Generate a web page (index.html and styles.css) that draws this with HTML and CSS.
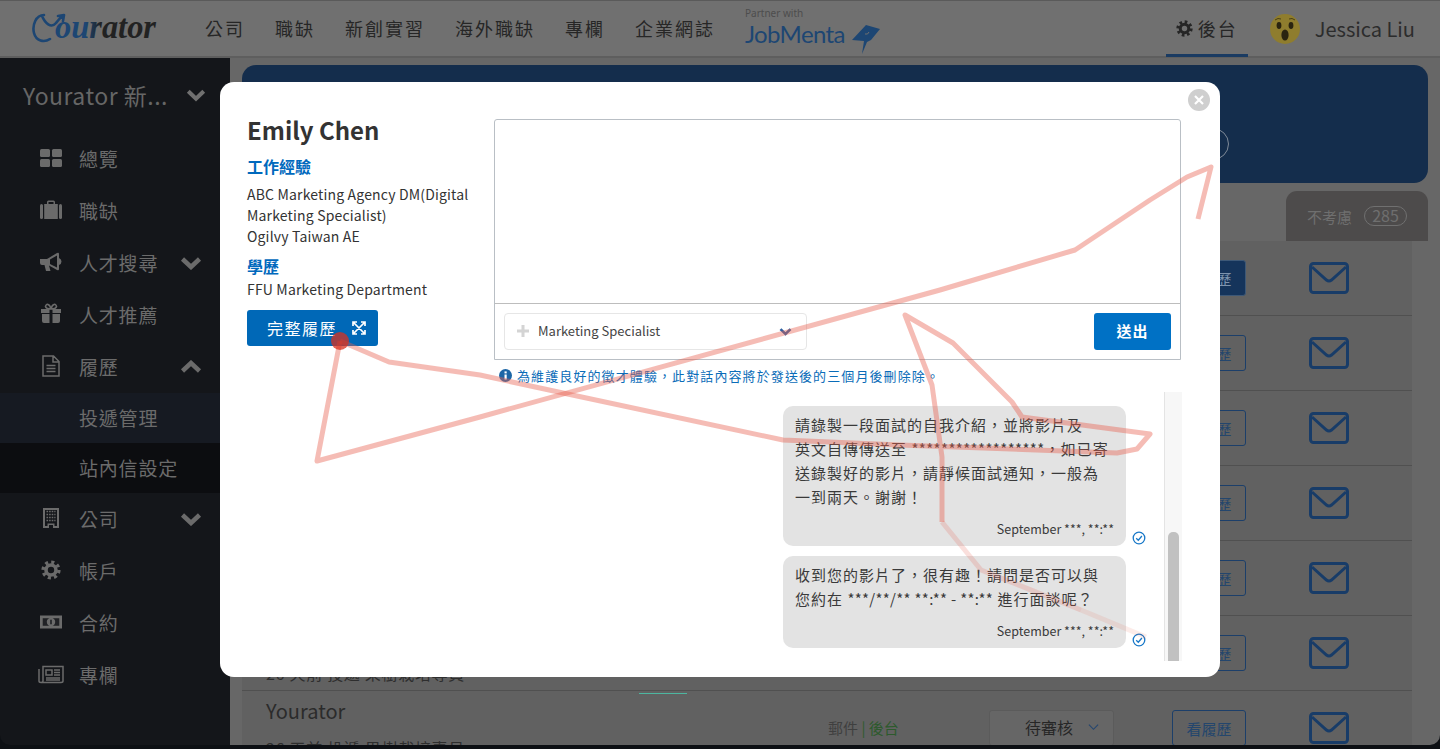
FILE: index.html
```html
<!DOCTYPE html>
<html lang="zh-Hant">
<head>
<meta charset="utf-8">
<title>Yourator</title>
<link rel="stylesheet" href="styles.css">
</head>
<body>
<svg class="sprite" width="0" height="0">
  <defs>
    <symbol id="mail" viewBox="0 0 40 32"><rect x="1.5" y="1.5" width="37" height="29" rx="3" fill="none" stroke="currentColor" stroke-width="3"/><path d="M3 5 L17.5 18 Q20 20 22.5 18 L37 5" fill="none" stroke="currentColor" stroke-width="3"/></symbol>
    <symbol id="chev-d" viewBox="0 0 22 14"><path d="M2.5 3 L11 11 L19.5 3" fill="none" stroke="currentColor" stroke-width="4.5"/></symbol>
    <symbol id="chev-u" viewBox="0 0 22 14"><path d="M2.5 11 L11 3 L19.5 11" fill="none" stroke="currentColor" stroke-width="4.5"/></symbol>
    <symbol id="cog" viewBox="0 0 20 20"><circle cx="10" cy="10" r="7.9" fill="none" stroke="currentColor" stroke-width="3.4" stroke-dasharray="3.1 3.1"/><circle cx="10" cy="10" r="5" fill="none" stroke="currentColor" stroke-width="3.6"/></symbol>
    <symbol id="check" viewBox="0 0 14 14"><circle cx="7" cy="7" r="5.8" fill="none" stroke="currentColor" stroke-width="1.3"/><path d="M4.2 7.2 L6.3 9.2 L9.9 5" fill="none" stroke="currentColor" stroke-width="1.3"/></symbol>
  </defs>
</svg>

<header class="topbar">
  <a class="logo">
    <svg width="126" height="36" viewBox="0 0 126 36">
      <defs><linearGradient id="lg" x1="0" x2="1" y1="0" y2="0"><stop offset="0" stop-color="#1d4673"/><stop offset=".3" stop-color="#1d4673"/><stop offset=".45" stop-color="#222"/><stop offset="1" stop-color="#222"/></linearGradient></defs>
      <path d="M12 6 C4 6 0 16 2 24 C4 32 12 34 18 30 M10 7 C13 14 19 20 24 14 C26 11 28 9 32 6 M32 6 L26 7 M32 6 L31 12" fill="none" stroke="#1d4673" stroke-width="2.6" stroke-linecap="round"/>
      <text class="logo-word" x="23" y="29" fill="url(#lg)" textLength="101" lengthAdjust="spacingAndGlyphs">ourator</text>
    </svg>
  </a>
  <nav class="mainnav">
    <a>公司</a><a>職缺</a><a>新創實習</a><a>海外職缺</a><a>專欄</a><a>企業網誌</a>
  </nav>
  <a class="jobmenta">
    <span class="jm-small">Partner with</span>
    <span class="jm-name">JobMenta<svg class="jm-ray" width="30" height="33" viewBox="0 0 30 33"><path d="M1 18 L15 3 L29 7 L20 18 L16 20 L11 32 L13 19 Z" fill="#1d4673"/><path d="M14 12 Q17 13 18 10" fill="none" stroke="#6f6f6f" stroke-width="1"/></svg></span>
  </a>
  <div class="userbar">
    <a class="backend"><svg class="backend-cog"><use href="#cog"/></svg>後台</a>
    <svg class="avatar" width="30" height="30" viewBox="0 0 30 30">
      <circle cx="15" cy="15" r="15" fill="#8f7d2e"/>
      <ellipse cx="9" cy="11.5" rx="2.4" ry="3.4" fill="#2a2410"/><ellipse cx="21" cy="11.5" rx="2.4" ry="3.4" fill="#2a2410"/>
      <ellipse cx="15" cy="21" rx="3.6" ry="5.6" fill="#2a2410"/>
      <path d="M5 6 Q8 3.5 11 5 M19 5 Q22 3.5 25 6" fill="none" stroke="#4a4015" stroke-width="1"/>
    </svg>
    <span class="username">Jessica Liu</span>
  </div>
</header>

<div class="shell">
  <aside class="sidebar">
    <div class="side-title"><span>Yourator 新...</span><svg class="chev-title"><use href="#chev-d"/></svg></div>
    <ul class="side-menu">
      <li class="side-item"><svg class="side-icon" viewBox="0 0 22 22"><rect x="0" y="2" width="10" height="8" rx="1.5"/><rect x="12" y="2" width="10" height="8" rx="1.5"/><rect x="0" y="12" width="10" height="8" rx="1.5"/><rect x="12" y="12" width="10" height="8" rx="1.5"/></svg>總覽</li>
      <li class="side-item"><svg class="side-icon" viewBox="0 0 22 22"><path d="M7 5 V3 Q7 1.500 8.500 1.500 H13.500 Q15 1.500 15 3 V5 H13.500 V3 H8.500 V5 Z"/><rect x="0" y="5" width="3" height="15" rx="1.5"/><rect x="4.200" y="5" width="13.600" height="15"/><rect x="19" y="5" width="3" height="15" rx="1.500"/></svg>職缺</li>
      <li class="side-item"><svg class="side-icon" viewBox="0 0 22 22"><path d="M0 8 H7 L17 2 Q19 1 19 3 V7 Q21.500 8 21.500 10.500 Q21.500 13 19 14 V18 Q19 20 17 19 L9 14.500 L10.500 20 H6 L4.500 14 H2 Q0 14 0 12 Z M10 8.500 V13 L17 16.500 V4.500 Z" fill-rule="evenodd"/></svg>人才搜尋<svg class="side-chev"><use href="#chev-d"/></svg></li>
      <li class="side-item"><svg class="side-icon" viewBox="0 0 22 22"><path d="M2 11 H9.500 V20 H4 Q2 20 2 18 Z M12.500 11 H20 V18 Q20 20 18 20 H12.500 Z M1 6 H9.500 V10 H1 Z M12.500 6 H21 V10 H12.500 Z"/><path d="M11 6 Q6 6 5.500 3.500 Q6 1 8 1.500 Q10 2 11 6 Q12 2 14 1.500 Q16 1 16.500 3.500 Q16 6 11 6 Z" fill="none" stroke="currentColor" stroke-width="1.600"/></svg>人才推薦</li>
      <li class="side-item"><svg class="side-icon" viewBox="0 0 22 22"><path d="M3 1 H13.500 L19 6.500 V21 H3 Z M13 1 V7 H19 M6.500 10.500 H15.500 M6.500 13.500 H15.500 M6.500 16.500 H15.500" fill="none" stroke="currentColor" stroke-width="1.500"/></svg>履歷<svg class="side-chev"><use href="#chev-u"/></svg></li>
      <li class="side-sub active">投遞管理</li>
      <li class="side-sub">站內信設定</li>
      <li class="side-item"><svg class="side-icon" viewBox="0 0 22 22"><path d="M3 1 H19 V21 H13 V18 H9 V21 H3 Z M5 3 V19 H7.500 V16.500 H14.500 V19 H17 V3 Z" fill-rule="evenodd"/><path d="M6.500 4.500 H15.500 M6.500 7.500 H15.500 M6.500 10.500 H15.500 M6.500 13.500 H15.500" fill="none" stroke="currentColor" stroke-width="1.500" stroke-dasharray="1.600 1"/></svg>公司<svg class="side-chev"><use href="#chev-d"/></svg></li>
      <li class="side-item"><svg class="side-icon side-icon-cog"><use href="#cog"/></svg>帳戶</li>
      <li class="side-item"><svg class="side-icon" viewBox="0 0 24 22"><path d="M0 4 H24 V18 H0 Z M3 7 V15 H21 V7 Z" fill-rule="evenodd"/><path d="M3 7 H21 V15 H3 Z" opacity=".15"/><circle cx="12" cy="11" r="4.600"/><path d="M12 8.500 V13.500" stroke="#14161b" stroke-width="1.500"/></svg>合約</li>
      <li class="side-item"><svg class="side-icon side-icon-wide" viewBox="0 0 26 22"><path d="M1 6 V18 Q1 19.500 3 19.500 H23 Q25 19.500 25 18 V3.500 H5 V18 Q5 19.500 3 19.500" fill="none" stroke="currentColor" stroke-width="1.500"/><path d="M8 7 H14 V12 H8 Z" fill="none" stroke="currentColor" stroke-width="1.500"/><path d="M16 7 H22 M16 9.500 H22 M16 12 H22 M8 15 H22 M8 17 H22" stroke="currentColor" stroke-width="1.300"/></svg>專欄</li>
    </ul>
  </aside>

  <main class="content">
    <section class="banner"><span class="banner-ring"></span></section>
    <div class="tabs"><div class="tab">不考慮<span class="tab-count">285</span></div></div>
    <div class="rows">
      <div class="row"><span></span><span></span><span></span><a class="btn-resume filled">看履歷</a><svg class="mail"><use href="#mail"/></svg></div>
      <div class="row"><span></span><span></span><span></span><a class="btn-resume">看履歷</a><svg class="mail"><use href="#mail"/></svg></div>
      <div class="row"><span></span><span></span><span></span><a class="btn-resume">看履歷</a><svg class="mail"><use href="#mail"/></svg></div>
      <div class="row"><span></span><span></span><span></span><a class="btn-resume">看履歷</a><svg class="mail"><use href="#mail"/></svg></div>
      <div class="row"><span></span><span></span><span></span><a class="btn-resume">看履歷</a><svg class="mail"><use href="#mail"/></svg></div>
      <div class="row"><div class="cand"><div class="cand-name">Yourator</div><div class="cand-sub">26 天前 投遞 果樹栽培專員</div></div><span></span><span></span><a class="btn-resume">看履歷</a><svg class="mail"><use href="#mail"/></svg></div>
      <div class="row"><div class="cand"><div class="cand-name">Yourator</div><div class="cand-sub">26 天前 投遞 果樹栽培專員</div></div><div class="contact">郵件 <i>|</i> <b>後台</b></div><div class="status">待審核<svg class="status-chev" viewBox="0 0 12 8"><path d="M1 1.500 L6 6.500 L11 1.500" fill="none" stroke="currentColor" stroke-width="1.200"/></svg></div><a class="btn-resume">看履歷</a><svg class="mail"><use href="#mail"/></svg></div>
    </div>
  </main>
</div>
<div class="teal-mark"></div>

<div class="modal">
  <a class="modal-close"><svg width="10" height="10" viewBox="0 0 10 10"><path d="M1 1 L9 9 M9 1 L1 9" stroke="#fff" stroke-width="2.200"/></svg></a>
  <div class="profile">
    <h1 class="profile-name">Emily Chen</h1>
    <h2 class="profile-head">工作經驗</h2>
    <p class="profile-text">ABC Marketing Agency DM(Digital Marketing Specialist)<br>Ogilvy Taiwan AE</p>
    <h2 class="profile-head head-edu">學歷</h2>
    <p class="profile-text">FFU Marketing Department</p>
    <a class="btn-full">完整履歷<svg width="14" height="14" viewBox="0 0 14 14"><path d="M1 1 L13 13 M13 1 L1 13 M1 5 V1 H5 M9 1 H13 V5 M13 9 V13 H9 M5 13 H1 V9" fill="none" stroke="#fff" stroke-width="1.700"/></svg></a>
  </div>
  <div class="conv">
    <div class="composer">
      <div class="composer-input"></div>
      <div class="composer-bar">
        <div class="tpl-select">
          <svg class="tpl-plus" width="12" height="12" viewBox="0 0 12 12"><path d="M6 0 V12 M0 6 H12" stroke="#d4d4d4" stroke-width="3"/></svg>
          <span class="tpl-label">Marketing Specialist</span>
          <svg class="tpl-chev"><use href="#chev-d"/></svg>
        </div>
        <a class="btn-send">送出</a>
      </div>
    </div>
    <p class="notice"><svg width="13" height="13" viewBox="0 0 13 13"><circle cx="6.500" cy="6.500" r="6.500" fill="#1c66a6"/><rect x="5.500" y="5.500" width="2.200" height="5" fill="#fff"/><rect x="5.500" y="2.400" width="2.200" height="2" fill="#fff"/></svg>為維護良好的徵才體驗&#xFF0C;此對話內容將於發送後的三個月後刪除除。</p>
    <div class="chat">
      <div class="chat-list">
        <div class="msg">
          <div class="bubble">
            <p>請錄製一段面試的自我介紹&#xFF0C;並將影片及<br>英文自傳傳送至 <span class="mask-long">******************</span>&#xFF0C;如已寄<br>送錄製好的影片&#xFF0C;請靜候面試通知&#xFF0C;一般為<br>一到兩天。謝謝&#xFF01;</p>
            <time class="bubble-time">September ***, **:**</time>
          </div>
          <svg class="msg-check"><use href="#check"/></svg>
        </div>
        <div class="msg">
          <div class="bubble">
            <p>收到您的影片了&#xFF0C;很有趣&#xFF01;請問是否可以與<br>您約在 <span class="mask-date">***/**/** **:** - **:**</span> 進行面談呢&#xFF1F;</p>
            <time class="bubble-time">September ***, **:**</time>
          </div>
          <svg class="msg-check"><use href="#check"/></svg>
        </div>
      </div>
      <div class="chat-scroll"><div class="chat-thumb"></div></div>
    </div>
  </div>
</div>

<svg class="trail" width="1440" height="749" viewBox="0 0 1440 749">
  <g class="trail-main">
    <path d="M1198 219 L1211 167 L1187 177 L1150 200 L1075 250 L940 290 L480 417 L317 461 L340 341"/>
    <path d="M340 341 L389 362 L480 375 L563 393 L783 440 L900 445 L1117 453 L1137 449 L1150 434 L1022 417 L1012 402 L953 343 L905 315 L932 385 L942 457 L942 522"/>
  </g>
  <path class="trail-fade" d="M942 522 L981 570 L1081 610"/>
  <path class="trail-fade2" d="M1081 610 L1146 637"/>
  <circle class="trail-dot" cx="340" cy="341" r="9"/>
</svg>
</body>
</html>
```

FILE: styles.css
```css
* { box-sizing: border-box; }
html, body { margin: 0; height: 749px; overflow: hidden; }
body {
  position: relative;
  display: flex;
  flex-direction: column;
  background: #0d1014;
  font-family: "Noto Sans CJK TC", "Noto Sans", sans-serif;
  color: #333;
}
a { color: inherit; text-decoration: none; }
h1, h2, p, ul { margin: 0; padding: 0; }
ul { list-style: none; }
.sprite { position: absolute; }

/* top bar */
.topbar {
  height: 58px;
  flex: none;
  display: flex;
  align-items: center;
  background: #707070;
  border-top: 1px solid #5a5a5a;
  border-bottom: 2px solid #5e5e5e;
  padding-left: 32px;
}
.logo { display: block; width: 126px; height: 36px; margin-right: 47px; margin-top: -3px; }
.logo-word { font: italic 700 33px "Liberation Serif", serif; }
.mainnav { display: flex; gap: 30px; font-size: 18px; letter-spacing: 2px; color: #262626; margin-top: -1px; }
.jobmenta { display: flex; flex-direction: column; margin-left: 30px; margin-top: -1px; color: #1d4673; }
.jm-small { font: 10px/12px "Noto Sans", sans-serif; color: #4d4d4d; }
.jm-name { display: flex; align-items: flex-end; font: 24px/30px Lato, sans-serif; letter-spacing: -.6px; }
.jm-ray { margin-left: 6px; margin-bottom: -6px; }
.userbar { margin-left: auto; display: flex; align-items: center; height: 100%; padding-right: 25px; }
.backend {
  display: flex; align-items: center; gap: 5px;
  width: 82px; height: 100%; margin-top: 2px; padding-left: 10px;
  font-size: 18px; letter-spacing: 2px; color: #262626;
  border-bottom: 3px solid #1a3b62;
}
.backend-cog { width: 17px; height: 17px; color: #262626; }
.avatar { margin-left: 22px; margin-right: 15px; }
.username { font-size: 20px; color: #2c2c2c; }

/* shell */
.shell { height: 687px; flex: none; display: flex; overflow: hidden; border-radius: 0 0 10px 10px; }
.sidebar { width: 230px; flex: none; background: #14161a; color: #6b6b6b; }
.side-title {
  height: 75px; display: flex; align-items: center; justify-content: space-between;
  padding: 0 24px 2px 23px; font-size: 23px; letter-spacing: .5px; color: #666;
}
.chev-title { width: 20px; height: 14px; color: #707070; }
.side-item {
  position: relative; height: 52px; display: flex; align-items: center;
  padding: 0 0 2px 40px; font-size: 19px; letter-spacing: .8px;
}
.side-icon { width: 22px; height: 22px; margin-right: 17px; fill: currentColor; flex: none; }
.side-icon-cog { width: 20px; height: 20px; margin-left: 1px; margin-right: 18px; }
.side-icon-wide { width: 26px; margin-left: -2px; margin-right: 15px; }
.side-chev { width: 22px; height: 14px; position: absolute; left: 180px; top: 19px; color: #6b6b6b; }
.side-sub { height: 50px; display: flex; align-items: center; padding: 0 0 2px 79px; font-size: 19px; letter-spacing: .8px; background: #0c0d10; }
.side-sub.active { background: #161a22; }

/* content */
.content { flex: 1; min-width: 0; background: #676767; padding: 7px 12px 0; }
.banner { position: relative; height: 118px; border-radius: 14px; background: #142d4c; overflow: hidden; }
.banner-ring { position: absolute; left: 955px; top: 63px; width: 32px; height: 32px; border: 1px solid #7f8a98; border-radius: 50%; }
.tabs { display: flex; justify-content: flex-end; margin-top: 8px; }
.tab {
  width: 142px; height: 50px; display: flex; align-items: center; justify-content: center; gap: 12px;
  border-radius: 11px 11px 0 0; background: #4d4b4b; color: #6f6f6f; font-size: 15px;
}
.tab-count { width: 43px; height: 20px; border: 1px solid #707070; border-radius: 10px; text-align: center; line-height: 17px; font-size: 16px; }
.rows { width: 1170px; background: #616161; }
.row {
  height: 75px; display: grid; align-items: center;
  grid-template-columns: 562px 161px 183px 137px 40px;
  padding-left: 24px;
  border-bottom: 1px solid #505050;
  position: relative;
}
.cand { align-self: start; padding-top: 5px; }
.cand-name { font-size: 20px; line-height: 30px; color: #2b2b2b; }
.cand-sub { margin-top: 12px; font-size: 16px; line-height: 20px; letter-spacing: .7px; color: #2e2e2e; white-space: nowrap; }
.contact { font-size: 15px; color: #3f3f3f; padding-bottom: 2px; }
.contact i { font-style: normal; color: #2f5a2f; }
.contact b { font-weight: 400; color: #2d5a2d; }
.status {
  width: 125px; height: 36px; display: flex; align-items: center; gap: 15px;
  padding: 0 0 2px 35px;
  background: #666; border: 1px solid #5b5b5b; border-radius: 3px; font-size: 16px; color: #262626;
}
.status-chev { width: 11px; height: 8px; color: #24466f; }
.btn-resume {
  width: 74px; height: 36px; display: flex; align-items: center; justify-content: center;
  border: 1px solid #1c3f6a; border-radius: 3px; color: #24466d; font-size: 15px;
}
.btn-resume.filled { background: #15345b; color: #7d93ad; border-color: #3d5877; }
.mail { width: 40px; height: 32px; color: #183c68; }
.teal-mark { position: absolute; left: 639px; top: 693px; width: 48px; height: 1px; background: #4db6a0; }

/* modal */
.modal {
  position: absolute; left: 220px; top: 82px; width: 1000px; height: 595px;
  display: flex; background: #fff; border-radius: 14px; overflow: hidden;
}
.modal-close {
  position: absolute; right: 10px; top: 7px; width: 22px; height: 22px;
  display: flex; align-items: center; justify-content: center; border-radius: 50%; background: #cfcfcf;
}
.profile { width: 274px; flex: none; padding: 31px 0 0 27px; }
.profile-name { font-size: 24px; line-height: 34px; font-weight: 700; color: #333; }
.profile-head { margin-top: 7px; font-size: 16px; line-height: 24px; font-weight: 700; color: #0069bd; }
.head-edu { margin-top: 8px; line-height: 22px; }
.profile-text { margin-top: 6px; width: 225px; font-size: 14px; line-height: 21px; letter-spacing: .17px; color: #333; }
.head-edu + .profile-text { margin-top: 2px; }
.btn-full {
  margin-top: 10px; width: 131px; height: 36px; display: flex; align-items: center; justify-content: space-between;
  padding: 0 12px 0 20px; border-radius: 3px; background: #0068b7; color: #fff; font-size: 16px; letter-spacing: 1.500px;
}
.conv { width: 687px; flex: none; padding-top: 37px; display: flex; flex-direction: column; }
.composer { height: 241px; border: 1px solid #b9bfc5; border-radius: 3px 3px 0 0; display: flex; flex-direction: column; }
.composer-input { height: 184px; border-bottom: 1px solid #bdbdbd; }
.composer-bar { flex: 1; display: flex; align-items: center; justify-content: space-between; padding: 0 9px; }
.tpl-select {
  position: relative; width: 303px; height: 37px; display: flex; align-items: center;
  border: 1px solid #e6e6e6; border-radius: 4px; padding: 0 0 2px 12px;
}
.tpl-label { margin-left: 9px; font-size: 13px; color: #444; }
.tpl-chev { position: absolute; left: 274px; top: 13px; width: 13px; height: 9px; color: #2f62a3; }
.btn-send {
  width: 77px; height: 37px; display: flex; align-items: center; justify-content: center;
  padding-bottom: 2px; border-radius: 3px; background: #0071c5; color: #fff; font-size: 15px; font-weight: 700; letter-spacing: 1px;
}
.notice { display: flex; align-items: center; gap: 5px; height: 32px; padding: 0 0 2px 5px; font-size: 13px; letter-spacing: 1.1px; color: #0a6cb8; }
.chat { height: 269px; display: flex; justify-content: flex-end; margin-right: -1px; }
.chat-list { flex: 1; display: flex; flex-direction: column; align-items: flex-end; gap: 10px; padding: 14px 18px 0 0; }
.msg { position: relative; width: 343px; margin-right: 20px; }
.bubble { border-radius: 10px; background: #e3e3e3; padding: 7px 0 0 12px; font-size: 15px; line-height: 24px; letter-spacing: 1px; color: #3a3a3a; }
.bubble p { margin: 0; white-space: nowrap; }
.mask-long { letter-spacing: .4px; }
.mask-date { letter-spacing: .3px; }
.bubble-time { display: block; margin-top: 8px; padding: 0 12px 5px 0; text-align: right; font-size: 12.5px; line-height: 24px; letter-spacing: 0; color: #3a3a3a; }
.msg-check { position: absolute; right: -20px; bottom: 1px; width: 14px; height: 14px; color: #1878c8; }
.chat-scroll { position: relative; width: 18px; background: #f7f7f7; border-left: 1px solid #e4e4e4; }
.chat-thumb { position: absolute; left: 3px; right: 3px; top: 140px; bottom: 0; border-radius: 5px 5px 0 0; background: #c1c1c1; }

/* cursor trail */
.trail { position: absolute; left: 0; top: 0; pointer-events: none; }
.trail-main path { fill: none; stroke: #e8604e; stroke-opacity: .42; stroke-width: 5; stroke-linejoin: round; }
.trail-fade { fill: none; stroke: #e8604e; stroke-opacity: .2; stroke-width: 5; stroke-linejoin: round; }
.trail-fade2 { fill: none; stroke: #e8604e; stroke-opacity: .12; stroke-width: 5; }
.trail-dot { fill: #d8301f; fill-opacity: .75; }
```
